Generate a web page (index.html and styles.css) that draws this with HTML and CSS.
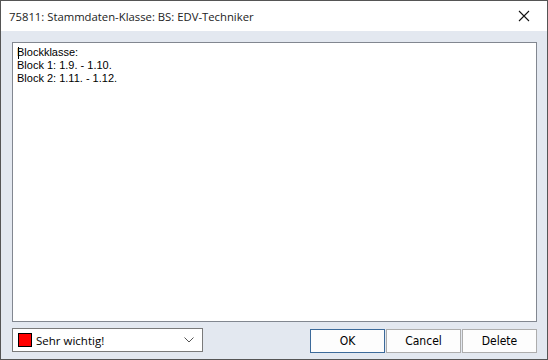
FILE: index.html
```html
<!DOCTYPE html>
<html lang="de">
<head>
    <meta charset="UTF-8">
    <title>Stammdaten-Klasse</title>
    <link rel="stylesheet" href="styles.css">
</head>
<body>

    <div class="window">
        <!-- Titelleiste -->
        <div class="title-bar">
            <span class="title">75811: Stammdaten-Klasse: BS: EDV-Techniker</span>
            <span class="close">
                <svg width="12" height="12" viewBox="0 0 12 12"><path d="M1 1 L11 11 M11 1 L1 11" stroke="#111" stroke-width="1.1" fill="none"/></svg>
            </span>
        </div>

        <div class="content">
            <div class="editor"><span class="caret"></span>Blockklasse:<br>Block 1: 1.9. - 1.10.<br>Block 2: 1.11. - 1.12.</div>

            <div class="footer">
                <div class="combo">
                    <span class="swatch"></span>
                    <span class="combo-text">Sehr wichtig!</span>
                    <svg class="chevron" width="10" height="6" viewBox="0 0 10 6"><path d="M0.5 0.5 L5 5 L9.5 0.5" stroke="#555" stroke-width="1" fill="none"/></svg>
                </div>
                <div class="buttons">
                    <button class="btn default">OK</button>
                    <button class="btn">Cancel</button>
                    <button class="btn">Delete</button>
                </div>
            </div>
        </div>
    </div>

</body>
</html>
```

FILE: styles.css
```css
body {
    margin: 0;
    font-family: "Liberation Sans", Arial, sans-serif;
}
.window {
    width: 548px;
    height: 360px;
    box-sizing: border-box;
    border: 1px solid #555;
    display: flex;
    flex-direction: column;
    background: #e3e8f0;
}
.title-bar {
    height: 30px;
    background: #fff;
    display: flex;
    align-items: center;
    justify-content: space-between;
    padding: 0 17px 0 8px;
    flex-shrink: 0;
}
.title {
    font-family: "Open Sans", "Noto Sans", sans-serif;
    font-size: 11.3px;
    color: #222;
}
.close {
    display: flex;
    align-items: center;
}
.content {
    flex: 1;
    display: flex;
    flex-direction: column;
    padding: 11px 10px 6px 11px;
}
.editor {
    flex: 1;
    background: #fff;
    border: 1px solid #828790;
    padding: 3px 4px;
    font-size: 11px;
    line-height: 13px;
    color: #000;
    position: relative;
}
.caret {
    position: absolute;
    left: 5px;
    top: 4px;
    width: 1px;
    height: 12px;
    background: #000;
}
.footer {
    display: flex;
    justify-content: space-between;
    margin-top: 6px;
    height: 25px;
}
.combo {
    width: 191px;
    height: 24px;
    box-sizing: border-box;
    border: 1px solid #7a7a7a;
    background: #fff;
    display: flex;
    align-items: center;
    padding: 0 8px 0 5px;
}
.swatch {
    width: 14px;
    height: 14px;
    box-sizing: border-box;
    background: #ff0000;
    border: 1px solid #000;
    margin-right: 4px;
}
.combo-text {
    flex: 1;
    font-family: "Open Sans", "Noto Sans", sans-serif;
    font-size: 11.5px;
    color: #000;
}
.buttons {
    display: flex;
    gap: 1px;
    margin-top: 1px;
}
.btn {
    width: 75px;
    height: 24px;
    box-sizing: border-box;
    border: 1px solid #adadad;
    background: #fdfdfd;
    font-family: "Liberation Sans Narrow", "DejaVu Sans Condensed", sans-serif;
    font-size: 12px;
    color: #000;
    padding: 0;
}
.btn.default {
    border-color: #3c6a9a;
}
```
